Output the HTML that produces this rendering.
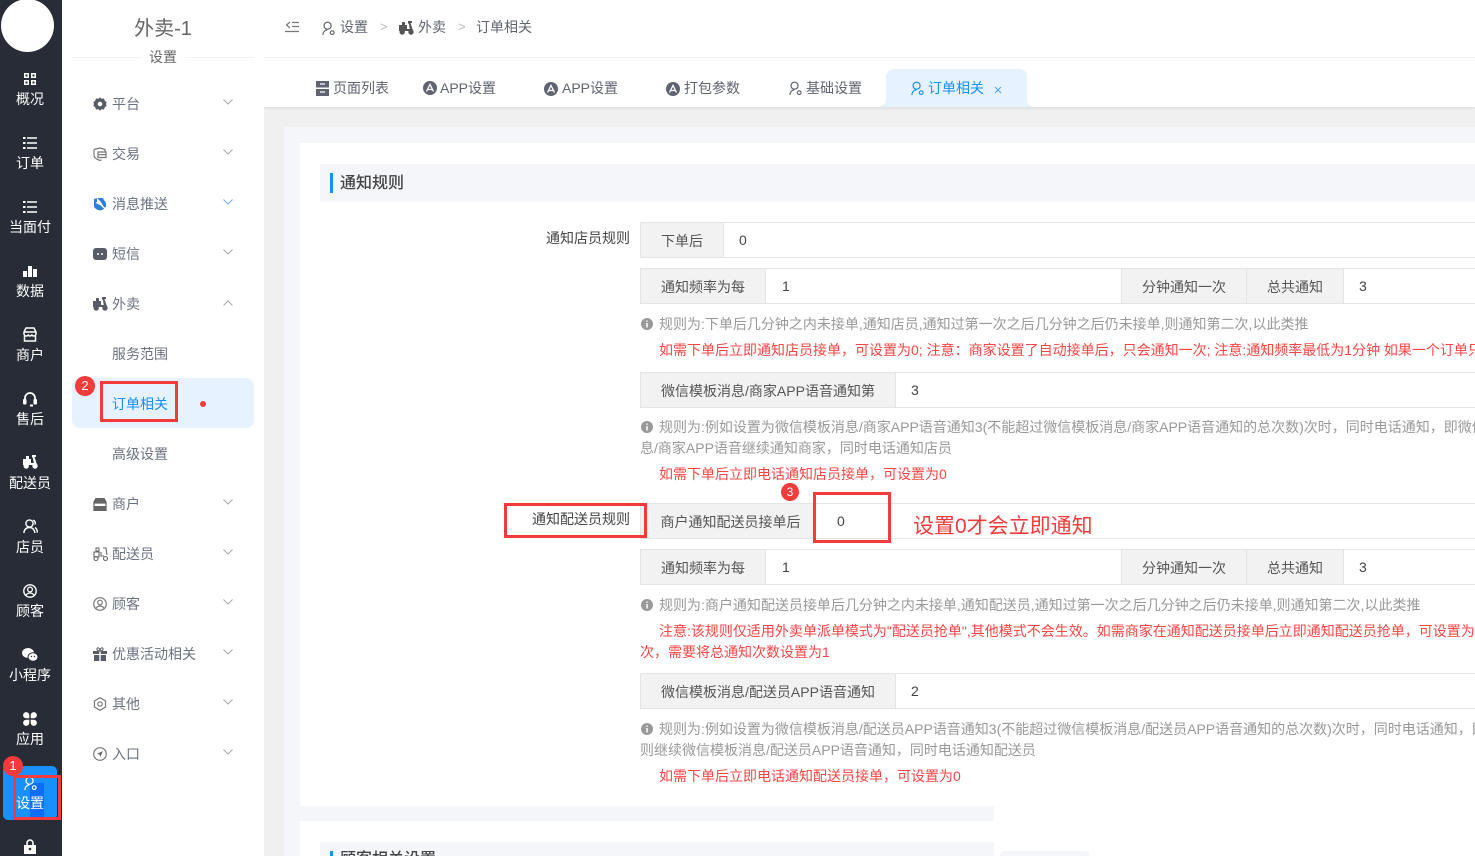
<!DOCTYPE html>
<html lang="zh"><head><meta charset="utf-8"><title>订单相关</title>
<style>
*{box-sizing:border-box}
html,body{margin:0;padding:0;width:1475px;height:856px;overflow:hidden;background:#fff}
body{position:relative;font:14px/20px "Liberation Sans","Noto Sans CJK SC",sans-serif;color:#333}
div,svg{position:absolute}
.t{white-space:nowrap;height:20px;line-height:20px}
.side{left:0;width:60px;text-align:center;color:#fff}
.m{left:112px;color:#6b7280}
.c{left:223px;width:10px;height:6px}
.bc{color:#5f6470}
.tab{color:#5f6470}
.h{color:#999}
.r{color:#ff4444}
.box{background:#fff;border:1px solid #e3e3e8;height:36px;left:640px;width:900px;border-radius:2px 0 0 2px}
.lab{background:#f2f2f2;border:1px solid #e3e3e8;height:36px;text-align:center;line-height:36px;color:#555;white-space:nowrap}
.v{color:#444}
.rb{border:3px solid #f33b3b;background:transparent}
.bd{background:#f33b3b;color:#fff;border-radius:50%;text-align:center}
</style></head><body>
<svg width="0" height="0" style="position:absolute"><defs>
<symbol id="chev" viewBox="0 0 10 6"><path d="M.5.5 5 5 9.500.5" fill="none" stroke="currentColor" stroke-width="1"/></symbol>
<symbol id="list" viewBox="0 0 14 14"><path d="M0 1h2.500v2H0zM0 6h2.500v2H0zM0 11h2.500v2H0zM4 1.200h10v1.500H4zM4 6.200h10v1.500H4zM4 11.200h10v1.500H4z" fill="currentColor"/></symbol>
<symbol id="grid" viewBox="0 0 14 14"><path fill-rule="evenodd" d="M1 1h5v5H1zM2.500 2.500v2h2v-2zM8 1h5v5H8zM9.500 2.500v2h2v-2zM1 8h5v5H1zM2.500 9.500v2h2v-2zM8 8h5v5H8zM9.500 9.500v2h2v-2z" fill="currentColor"/></symbol>
<symbol id="bike" viewBox="0 0 15 14"><path d="M0 4h8V10H0zM9 0h4v2h-1.500L14 9.500l-1.500.5H8V8h2.800L9.800 2.500H9zM3 1h3v3H3z" fill="currentColor"/><circle cx="3.200" cy="11" r="2.700" fill="currentColor"/><circle cx="12" cy="11" r="2.700" fill="currentColor"/></symbol>
<symbol id="user" viewBox="0 0 14 16"><circle cx="6" cy="5" r="3.800" fill="none" stroke="currentColor" stroke-width="1.300"/><path d="M1 15c0-3 2-5 4.500-5.500" fill="none" stroke="currentColor" stroke-width="1.300"/><circle cx="11" cy="12.500" r="2" fill="none" stroke="currentColor" stroke-width="1.300"/></symbol>
<symbol id="app" viewBox="0 0 14 14"><circle cx="7" cy="7" r="7" fill="currentColor"/><path d="M3.500 10.500 7 3.500l3.500 7M5 8.500h4" fill="none" stroke="#fff" stroke-width="1.300"/></symbol>
</defs></svg>

<!-- main backgrounds -->
<div style="left:264px;top:0;width:1211px;height:856px;background:#f0f0f0"></div>
<div style="left:264px;top:0;width:1211px;height:107px;background:#fff;box-shadow:0 1px 4px rgba(0,0,0,.1)"></div>
<div style="left:264px;top:57px;width:1211px;height:1px;background:#f2f2f4"></div>
<div style="left:284px;top:127px;width:1191px;height:729px;background:#f5f6fa"></div>
<div style="left:300px;top:143px;width:1175px;height:663px;background:#fff"></div>
<div style="left:300px;top:821px;width:1175px;height:35px;background:#fff"></div>
<div style="left:320px;top:164px;width:1155px;height:38px;background:#f5f6fa"></div>
<div style="left:330px;top:173px;width:3px;height:20px;background:#1890ff"></div>
<div class="t" style="left:340px;top:172px;height:20px;font-size:16px;font-weight:500;color:#444;line-height:21px;padding-top:1px">通知规则</div>
<div style="left:320px;top:842px;width:680px;height:14px;background:#f5f6fa"></div>
<div style="left:330px;top:851px;width:3px;height:5px;background:#1890ff"></div>
<div class="t" style="left:340px;top:850px;font-size:16px;font-weight:500;color:#444">顾客相关设置</div>
<div style="left:994px;top:806px;width:481px;height:50px;background:#fff"></div>
<div style="left:1000px;top:851px;width:90px;height:5px;background:#f5f6fa;border-radius:40px 40px 0 0"></div>

<!-- dark sidebar -->
<div style="left:0;top:0;width:62px;height:856px;background:#282c36"></div>
<div style="left:1px;top:-1px;width:53px;height:53px;border-radius:50%;background:#fff"></div>
<div style="left:3px;top:766px;width:54px;height:54px;background:#1890ff;border-radius:5px"></div>
<div style="left:30px;top:783px;width:14px;height:37px;background:#0d6efd"></div>

<svg style="left:23px;top:72px;color:#fff" width="14" height="14"><use href="#grid"/></svg>
<svg style="left:23px;top:136px;color:#fff" width="14" height="14"><use href="#list"/></svg>
<svg style="left:23px;top:200px;color:#fff" width="14" height="14"><use href="#list"/></svg>
<svg style="left:23px;top:264px" width="14" height="14" viewBox="0 0 14 14"><path d="M0 7h4v6H0zM5 2h4v11H5zM10 5h4v8h-4z" fill="#fff"/></svg>
<svg style="left:23px;top:327px" width="14" height="15" viewBox="0 0 14 15"><path d="M3 1h8l2 4v2c0 1-1 2-2 2s-2-.5-2-1.500C8.500 8.500 8 9 7 9s-1.500-.500-2-1.500C5 8.500 4 9 3 9S1 8 1 7V5z" fill="none" stroke="#fff" stroke-width="1.500"/><path d="M1.500 9v5h11V9" fill="none" stroke="#fff" stroke-width="1.500"/><path d="M1 5h12" stroke="#fff" stroke-width="1.500"/></svg>
<svg style="left:23px;top:392px" width="14" height="15" viewBox="0 0 14 15"><path d="M2 8V6a5 5 0 0 1 10 0v2" fill="none" stroke="#fff" stroke-width="1.800"/><rect x="0" y="7" width="3.500" height="5.500" rx="1" fill="#fff"/><rect x="10.500" y="7" width="3.500" height="5.500" rx="1" fill="#fff"/><rect x="7" y="12.500" width="3" height="2" fill="#fff"/></svg>
<svg style="left:23px;top:455px;color:#fff" width="15" height="14"><use href="#bike"/></svg>
<svg style="left:23px;top:519px" width="15" height="15" viewBox="0 0 15 15"><circle cx="6.500" cy="4.500" r="3.600" fill="none" stroke="#fff" stroke-width="1.400"/><path d="M.8 14c.5-3.500 2.500-5.500 5.700-5.500S11.500 11 12 14M10 1.200c2 .6 2.800 2.500 2 4.300M12 8.500c1.500 1 2.200 2.800 2.400 5" fill="none" stroke="#fff" stroke-width="1.400"/></svg>
<svg style="left:23px;top:584px" width="14" height="14" viewBox="0 0 14 14"><circle cx="7" cy="7" r="6.200" fill="none" stroke="#fff" stroke-width="1.400"/><circle cx="7" cy="5.500" r="2.400" fill="none" stroke="#fff" stroke-width="1.300"/><path d="M2.800 11.500C4 9.500 5.500 9 7 9s3 .5 4.200 2.500" fill="none" stroke="#fff" stroke-width="1.300"/></svg>
<svg style="left:22px;top:648px" width="16" height="14" viewBox="0 0 16 14"><ellipse cx="6" cy="5" rx="6" ry="5" fill="#fff"/><ellipse cx="11" cy="9" rx="5" ry="4.300" fill="#fff" stroke="#282c36"/><circle cx="9.500" cy="8.500" r=".7" fill="#282c36"/><circle cx="12.500" cy="8.500" r=".7" fill="#282c36"/></svg>
<svg style="left:23px;top:712px" width="14" height="14" viewBox="0 0 14 14"><path d="M6.300 6.300H3.200a3.100 3.100 0 1 1 3.100-3.100zM7.700 6.300V3.200a3.100 3.100 0 1 1 3.100 3.100zM6.300 7.700v3.100a3.100 3.100 0 1 1-3.100-3.100zM7.700 7.700h3.100a3.100 3.100 0 1 1-3.100 3.100z" fill="#fff"/></svg>
<svg style="left:24px;top:776px;color:#fff" width="13" height="15"><use href="#user"/></svg>
<svg style="left:24px;top:839px" width="12" height="15" viewBox="0 0 12 15"><path d="M3 6V4a3 3 0 0 1 6 0v2" fill="none" stroke="#fff" stroke-width="1.600"/><path d="M0 6h12v9H0z" fill="#fff"/><circle cx="6" cy="10" r="1.300" fill="#282c36"/></svg>

<div class="t side" style="top:89px">概况</div>
<div class="t side" style="top:153px">订单</div>
<div class="t side" style="top:217px">当面付</div>
<div class="t side" style="top:281px">数据</div>
<div class="t side" style="top:345px">商户</div>
<div class="t side" style="top:409px">售后</div>
<div class="t side" style="top:473px">配送员</div>
<div class="t side" style="top:537px">店员</div>
<div class="t side" style="top:601px">顾客</div>
<div class="t side" style="top:665px">小程序</div>
<div class="t side" style="top:729px">应用</div>
<div class="t side" style="top:793px">设置</div>

<!-- sub menu -->
<div style="left:62px;top:0;width:202px;height:856px;background:#fff"></div>
<div class="t" style="left:62px;width:202px;text-align:center;top:17px;height:24px;line-height:24px;font-size:20px;color:#666">外卖-1</div>
<div style="left:72px;top:57px;width:182px;height:1px;background:#f2f2f4"></div>
<div class="t" style="left:62px;width:202px;text-align:center;top:47px;color:#666"><span style="background:#fff;padding:0 8px;display:inline-block">设置</span></div>
<div style="left:72px;top:378px;width:182px;height:50px;border-radius:8px;background:#e6f2ff"></div>

<svg style="left:93px;top:97px" width="14" height="14" viewBox="0 0 14 14"><path fill-rule="evenodd" d="M7 .3 8.500 1.800l2.500-.3.800 2.300 1.900 1.500L13 7l.7 1.700-1.900 1.500-.8 2.300-2.500-.3L7 13.700l-1.500-1.500-2.500.3-.8-2.300L.3 8.700 1 7 .3 5.300l1.900-1.500L3 1.500l2.500.3zM7 4.700a2.300 2.300 0 1 0 0 4.600 2.300 2.300 0 0 0 0-4.600z" fill="#585c66"/></svg>
<svg style="left:93px;top:147px" width="14" height="14" viewBox="0 0 14 14"><path d="M1 2.500 7 1l5 1.500v2M1 2.500V8c0 2.500 3 4.500 6 5.500l1.500-.7" fill="none" stroke="#777" stroke-width="1.200"/><path d="M5 5h8v5.500H5zM5 7.700h8" fill="none" stroke="#777" stroke-width="1.200"/></svg>
<svg style="left:93px;top:197px" width="14" height="14" viewBox="0 0 14 14"><path d="M1 2 5 1l4 0 4 1.500V9c0 2-3 4-6 4.500C4 13 1 11 1 9z" fill="#2f7fd8"/><path d="M4 1l3.500 3.500L11 10l2 1-1 1.500L7 8 2.500 6l1.500-1zM10 1.500l3 1V6z" fill="#fff"/></svg>
<svg style="left:93px;top:247px" width="14" height="14" viewBox="0 0 14 14"><rect y="1" width="14" height="12" rx="3" fill="#585c66"/><circle cx="5" cy="7" r="1" fill="#fff"/><circle cx="9" cy="7" r="1" fill="#fff"/></svg>
<svg style="left:93px;top:297px;color:#585c66" width="15" height="14"><use href="#bike"/></svg>
<svg style="left:93px;top:497px" width="14" height="14" viewBox="0 0 14 14"><path d="M2.500 1h9L14 5.500H0z" fill="#666"/><path d="M1 6h12v7.500H1z" fill="none" stroke="#666" stroke-width="1.200"/><path d="M1 9h12v4H1z" fill="#666"/></svg>
<svg style="left:93px;top:547px" width="15" height="14" viewBox="0 0 15 14"><path d="M1 5h5v5H1zM8 5v4h3M10 1h3l1 7" fill="none" stroke="#666" stroke-width="1.100"/><circle cx="3" cy="11.500" r="2" fill="none" stroke="#666" stroke-width="1.100"/><circle cx="12.500" cy="11.500" r="2" fill="none" stroke="#666" stroke-width="1.100"/><path d="M3 1h3v3H3z" fill="none" stroke="#666"/></svg>
<svg style="left:93px;top:597px" width="14" height="14" viewBox="0 0 14 14"><circle cx="7" cy="7" r="6.300" fill="none" stroke="#777" stroke-width="1.200"/><circle cx="7" cy="5.500" r="2.300" fill="none" stroke="#777" stroke-width="1.200"/><path d="M2.800 11.500C4 9.500 5.500 9 7 9s3 .5 4.200 2.500" fill="none" stroke="#777" stroke-width="1.200"/></svg>
<svg style="left:93px;top:647px" width="14" height="14" viewBox="0 0 14 14"><path d="M0 4h6.300v3H0zM7.700 4H14v3H7.700zM1 8h5.300v6H1zM7.700 8H13v6H7.700z" fill="#585c66"/><path d="M7 4C5 4 3.500 3 4 1.500S7 1 7 4c0-3 2.500-4 3-2.500S9 4 7 4z" fill="none" stroke="#585c66"/></svg>
<svg style="left:93px;top:697px" width="14" height="14" viewBox="0 0 14 14"><path d="M7 .7l5.500 3.100v6.400L7 13.300 1.500 10.200V3.800z" fill="none" stroke="#777" stroke-width="1.200"/><circle cx="7" cy="7" r="2.200" fill="none" stroke="#777" stroke-width="1.200"/></svg>
<svg style="left:93px;top:747px" width="14" height="14" viewBox="0 0 14 14"><circle cx="7" cy="7" r="6.300" fill="none" stroke="#777" stroke-width="1.200"/><path d="M10 4 4 6.800l2.500.8.700 2.400z" fill="#666"/></svg>

<div class="t m" style="top:94px">平台</div>
<div class="t m" style="top:144px">交易</div>
<div class="t m" style="top:194px">消息推送</div>
<div class="t m" style="top:244px">短信</div>
<div class="t m" style="top:294px">外卖</div>
<div class="t m" style="top:344px">服务范围</div>
<div class="t m" style="top:394px;color:#1890ff">订单相关</div>
<div class="t m" style="top:444px">高级设置</div>
<div class="t m" style="top:494px">商户</div>
<div class="t m" style="top:544px">配送员</div>
<div class="t m" style="top:594px">顾客</div>
<div class="t m" style="top:644px">优惠活动相关</div>
<div class="t m" style="top:694px">其他</div>
<div class="t m" style="top:744px">入口</div>
<div style="left:200px;top:401px;width:6px;height:6px;border-radius:50%;background:#f33b3b"></div>

<svg class="c" style="top:99px;color:#aaa"><use href="#chev"/></svg>
<svg class="c" style="top:149px;color:#aaa"><use href="#chev"/></svg>
<svg class="c" style="top:199px;color:#6aaef0"><use href="#chev"/></svg>
<svg class="c" style="top:249px;color:#aaa"><use href="#chev"/></svg>
<svg class="c" style="top:300px;color:#aaa;transform:scaleY(-1)"><use href="#chev"/></svg>
<svg class="c" style="top:499px;color:#aaa"><use href="#chev"/></svg>
<svg class="c" style="top:549px;color:#aaa"><use href="#chev"/></svg>
<svg class="c" style="top:599px;color:#aaa"><use href="#chev"/></svg>
<svg class="c" style="top:649px;color:#aaa"><use href="#chev"/></svg>
<svg class="c" style="top:699px;color:#aaa"><use href="#chev"/></svg>
<svg class="c" style="top:749px;color:#aaa"><use href="#chev"/></svg>

<!-- breadcrumb -->
<svg style="left:285px;top:21px" width="14" height="12" viewBox="0 0 14 12"><path d="M5 1 1.500 4 5 7M7 1.500h7M7 5.500h7M0 10.500h14" fill="none" stroke="#777" stroke-width="1.200"/></svg>
<svg style="left:322px;top:21px;color:#5f6470" width="13" height="15"><use href="#user"/></svg>
<div class="t bc" style="left:340px;top:17px">设置</div>
<div class="t" style="left:380px;top:17px;color:#bbb;font-size:13px">&gt;</div>
<svg style="left:399px;top:21px;color:#555" width="15" height="14"><use href="#bike"/></svg>
<div class="t bc" style="left:418px;top:17px">外卖</div>
<div class="t" style="left:458px;top:17px;color:#bbb;font-size:13px">&gt;</div>
<div class="t bc" style="left:476px;top:17px">订单相关</div>

<!-- tabs -->
<svg style="left:879px;top:69px" width="154" height="38" viewBox="0 0 154 38"><path d="M15 0h126a7 7 0 0 1 7 7v24c0 4 2 5 6 7H0c4-2 7-3 7-7V7a8 8 0 0 1 8-7z" fill="#e6f2ff"/></svg>
<svg style="left:316px;top:81px" width="13" height="15" viewBox="0 0 13 15"><path d="M0 0h13v6.500H0zM0 8h13v7H0z" fill="#5f6470"/><path d="M4 3h5M4 11h5" stroke="#fff" stroke-width="1.300"/></svg>
<div class="t tab" style="left:333px;top:78px">页面列表</div>
<svg style="left:423px;top:81px;color:#5f6470" width="14" height="14"><use href="#app"/></svg>
<div class="t tab" style="left:440px;top:78px">APP设置</div>
<svg style="left:544px;top:82px;color:#5f6470" width="14" height="14"><use href="#app"/></svg>
<div class="t tab" style="left:562px;top:78px">APP设置</div>
<svg style="left:666px;top:82px;color:#5f6470" width="14" height="14"><use href="#app"/></svg>
<div class="t tab" style="left:684px;top:78px">打包参数</div>
<svg style="left:789px;top:81px;color:#5f6470" width="13" height="15"><use href="#user"/></svg>
<div class="t tab" style="left:806px;top:78px">基础设置</div>
<svg style="left:911px;top:81px;color:#1890ff" width="13" height="15"><use href="#user"/></svg>
<div class="t" style="left:928px;top:78px;color:#1890ff">订单相关</div>
<svg style="left:994px;top:86px" width="8" height="8" viewBox="0 0 8 8"><path d="M1 1l6 6M7 1 1 7" stroke="#4aa3ff" stroke-width="1"/></svg>

<!-- form -->
<div class="t" style="left:546px;top:228px;color:#444">通知店员规则</div>
<div class="box" style="top:222px"></div>
<div class="lab" style="left:640px;top:222px;width:84px">下单后</div>
<div class="t v" style="left:739px;top:230px">0</div>

<div class="box" style="top:268px"></div>
<div class="lab" style="left:640px;top:268px;width:126px">通知频率为每</div>
<div class="t v" style="left:782px;top:276px">1</div>
<div class="lab" style="left:1121px;top:268px;width:126px">分钟通知一次</div>
<div class="lab" style="left:1246px;top:268px;width:98px">总共通知</div>
<div class="t v" style="left:1359px;top:276px">3</div>

<svg style="left:641px;top:318px" width="12" height="12" viewBox="0 0 12 12"><circle cx="6" cy="6" r="6" fill="#999"/><path d="M6 2.500v1.300M6 5v4.500" stroke="#fff" stroke-width="1.500"/></svg>
<div class="t h" style="left:659px;top:314px">规则为:下单后几分钟之内未接单,通知店员,通知过第一次之后几分钟之后仍未接单,则通知第二次,以此类推</div>
<div class="t r" style="left:659px;top:340px">如需下单后立即通知店员接单，可设置为0; 注意：商家设置了自动接单后，只会通知一次; 注意:通知频率最低为1分钟 如果一个订单只</div>

<div class="box" style="top:372px"></div>
<div class="lab" style="left:640px;top:372px;width:256px">微信模板消息/商家APP语音通知第</div>
<div class="t v" style="left:911px;top:380px">3</div>

<svg style="left:641px;top:421px" width="12" height="12" viewBox="0 0 12 12"><circle cx="6" cy="6" r="6" fill="#999"/><path d="M6 2.500v1.300M6 5v4.500" stroke="#fff" stroke-width="1.500"/></svg>
<div class="t h" style="left:659px;top:417px">规则为:例如设置为微信模板消息/商家APP语音通知3(不能超过微信模板消息/商家APP语音通知的总次数)次时，同时电话通知，即微信模板消</div>
<div class="t h" style="left:640px;top:438px">息/商家APP语音继续通知商家，同时电话通知店员</div>
<div class="t r" style="left:659px;top:464px">如需下单后立即电话通知店员接单，可设置为0</div>

<div class="box" style="top:503px"></div>
<div class="t" style="left:532px;top:509px;color:#444">通知配送员规则</div>
<div class="lab" style="left:640px;top:503px;width:174px;padding-left:7px">商户通知配送员接单后</div>
<div class="t v" style="left:837px;top:511px">0</div>

<div class="box" style="top:549px"></div>
<div class="lab" style="left:640px;top:549px;width:126px">通知频率为每</div>
<div class="t v" style="left:782px;top:557px">1</div>
<div class="lab" style="left:1121px;top:549px;width:126px">分钟通知一次</div>
<div class="lab" style="left:1246px;top:549px;width:98px">总共通知</div>
<div class="t v" style="left:1359px;top:557px">3</div>

<svg style="left:641px;top:599px" width="12" height="12" viewBox="0 0 12 12"><circle cx="6" cy="6" r="6" fill="#999"/><path d="M6 2.500v1.300M6 5v4.500" stroke="#fff" stroke-width="1.500"/></svg>
<div class="t h" style="left:659px;top:595px">规则为:商户通知配送员接单后几分钟之内未接单,通知配送员,通知过第一次之后几分钟之后仍未接单,则通知第二次,以此类推</div>
<div class="t r" style="left:659px;top:621px">注意:该规则仅适用外卖单派单模式为"配送员抢单",其他模式不会生效。如需商家在通知配送员接单后立即通知配送员抢单，可设置为</div>
<div class="t r" style="left:640px;top:642px">次，需要将总通知次数设置为1</div>

<div class="box" style="top:673px"></div>
<div class="lab" style="left:640px;top:673px;width:256px">微信模板消息/配送员APP语音通知</div>
<div class="t v" style="left:911px;top:681px">2</div>

<svg style="left:641px;top:723px" width="12" height="12" viewBox="0 0 12 12"><circle cx="6" cy="6" r="6" fill="#999"/><path d="M6 2.500v1.300M6 5v4.500" stroke="#fff" stroke-width="1.500"/></svg>
<div class="t h" style="left:659px;top:719px">规则为:例如设置为微信模板消息/配送员APP语音通知3(不能超过微信模板消息/配送员APP语音通知的总次数)次时，同时电话通知，即微信</div>
<div class="t h" style="left:640px;top:740px">则继续微信模板消息/配送员APP语音通知，同时电话通知配送员</div>
<div class="t r" style="left:659px;top:766px">如需下单后立即电话通知配送员接单，可设置为0</div>

<!-- annotations -->
<div class="rb" style="left:13px;top:775px;width:48px;height:45px"></div>
<div class="rb" style="left:100px;top:381px;width:78px;height:41px"></div>
<div class="rb" style="left:504px;top:503px;width:143px;height:35px"></div>
<div class="rb" style="left:813px;top:492px;width:78px;height:51px"></div>
<div class="bd" style="left:3px;top:756px;width:20px;height:20px;line-height:20px;font-size:13px">1</div>
<div class="bd" style="left:75px;top:376px;width:20px;height:20px;line-height:20px;font-size:13px">2</div>
<div class="bd" style="left:781px;top:483px;width:18px;height:18px;line-height:18px;font-size:12px">3</div>
<div class="t" style="left:913px;top:514px;height:26px;line-height:26px;font-size:21px;color:#f33b3b">设置0才会立即通知</div>
</body></html>
